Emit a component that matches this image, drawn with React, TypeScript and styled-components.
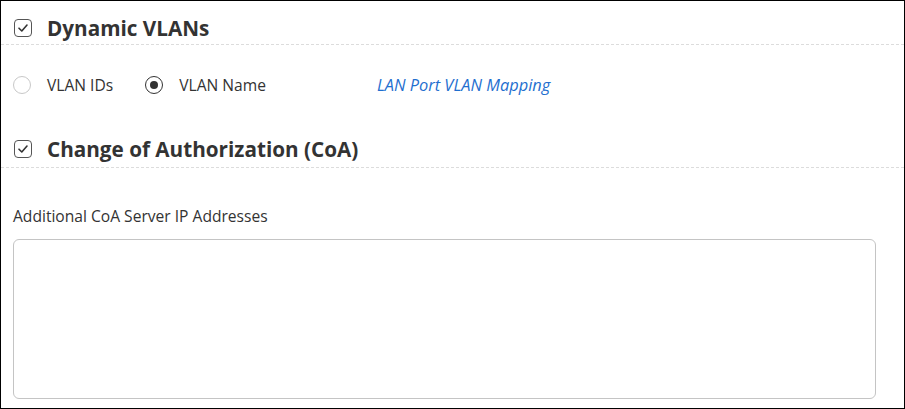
import React from "react";
import styled, { createGlobalStyle } from "styled-components";

const Global = createGlobalStyle`
  html, body { margin: 0; padding: 0; background: #fff; }
  body { font-family: "Open Sans", "Liberation Sans", sans-serif; color: #333; }
  * { box-sizing: border-box; }
`;

const Frame = styled.div`
  width: 905px;
  height: 409px;
  border: 1px solid #000;
  display: flex;
  flex-direction: column;
  overflow: hidden;
`;

const SectionHeader = styled.div<{ $top: number }>`
  height: 44px;
  padding: ${(p) => p.$top}px 13px 0;
  border-bottom: 1px dashed #dcdcdc;
  display: flex;
  align-items: flex-start;
`;

const HeaderLine = styled.label`
  display: flex;
  align-items: center;
  height: 28px;
  gap: 15px;
`;

const CheckBox = styled.span`
  width: 18px;
  height: 18px;
  border: 1.5px solid #555;
  border-radius: 4px;
  display: inline-flex;
  align-items: center;
  justify-content: center;
  flex: none;
`;

const Title = styled.span`
  font-size: 20.7px;
  font-weight: 700;
  color: #333;
`;

const RadioRow = styled.div`
  height: 79px;
  padding: 29px 12px 0;
  display: flex;
  align-items: flex-start;
`;

const RadioOption = styled.label<{ $gap: number }>`
  display: flex;
  align-items: center;
  height: 22px;
  gap: 16px;
  margin-right: ${(p) => p.$gap}px;
  font-size: 15.6px;
  color: #333;
`;

const RadioCircle = styled.span<{ $checked?: boolean }>`
  width: 18px;
  height: 18px;
  border-radius: 50%;
  border: ${(p) => (p.$checked ? "1.5px solid #333" : "1px solid #c8c8c8")};
  display: inline-flex;
  align-items: center;
  justify-content: center;
  flex: none;
  &::after {
    content: "";
    display: ${(p) => (p.$checked ? "block" : "none")};
    width: 8px;
    height: 8px;
    border-radius: 50%;
    background: #333;
  }
`;

const LinkText = styled.a`
  font-size: 16.4px;
  font-style: italic;
  color: #1f6fcf;
  text-decoration: none;
  height: 22px;
  line-height: 22px;
`;

const Body = styled.div`
  padding: 37px 12px 0;
  display: flex;
  flex-direction: column;
`;

const FieldLabel = styled.div`
  font-size: 15.6px;
  line-height: 22px;
  color: #333;
  margin-bottom: 12px;
`;

const TextArea = styled.textarea`
  width: 863px;
  height: 160px;
  border: 1px solid #c4c4c4;
  border-radius: 6px;
  resize: none;
  font-family: inherit;
  outline: none;
`;

const Check = () => (
  <svg width="12" height="12" viewBox="0 0 12 12" fill="none">
    <path d="M2 6.2 L4.8 9 L10 3" stroke="#333" strokeWidth="1.6" strokeLinecap="round" strokeLinejoin="round" />
  </svg>
);

export default function App() {
  return (
    <>
      <Global />
      <Frame>
        <SectionHeader $top={13}>
          <HeaderLine>
            <CheckBox><Check /></CheckBox>
            <Title>Dynamic VLANs</Title>
          </HeaderLine>
        </SectionHeader>
        <RadioRow>
          <RadioOption $gap={32}>
            <RadioCircle />
            VLAN IDs
          </RadioOption>
          <RadioOption $gap={111}>
            <RadioCircle $checked />
            VLAN Name
          </RadioOption>
          <LinkText>LAN Port VLAN Mapping</LinkText>
        </RadioRow>
        <SectionHeader $top={11}>
          <HeaderLine>
            <CheckBox><Check /></CheckBox>
            <Title>Change of Authorization (CoA)</Title>
          </HeaderLine>
        </SectionHeader>
        <Body>
          <FieldLabel>Additional CoA Server IP Addresses</FieldLabel>
          <TextArea />
        </Body>
      </Frame>
    </>
  );
}
